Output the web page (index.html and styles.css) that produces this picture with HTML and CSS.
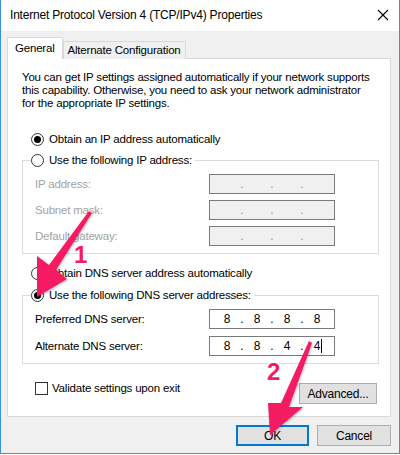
FILE: index.html
```html
<!DOCTYPE html>
<html lang="en">

<head>
    <meta charset="UTF-8">
    <title>Internet Protocol Version 4 (TCP/IPv4) Properties</title>
    <link rel="stylesheet" href="styles.css">
</head>

<body>
    <div class="window">
        <div class="titlebar">
            <span class="title">Internet Protocol Version 4 (TCP/IPv4) Properties</span>
            <svg class="close" width="12" height="12" viewBox="0 0 12 12">
                <path d="M1 1 L11 11 M11 1 L1 11" stroke="#000" stroke-width="1.1" fill="none" />
            </svg>
        </div>

        <div class="content">
            <div class="tabs">
                <div class="tab active">General</div>
                <div class="tab">Alternate Configuration</div>
            </div>

            <div class="panel">
                <p class="intro">You can get IP settings assigned automatically if your network supports<br>this capability. Otherwise, you need to ask your network administrator<br>for the appropriate IP settings.</p>

                <div class="option first"><span class="radio checked"></span>Obtain an IP address automatically</div>

                <fieldset class="group off">
                    <legend><span class="radio"></span>Use the following IP address:</legend>
                    <div class="field">
                        <span class="label">IP address:</span>
                        <div class="ipbox"><span class="oct"></span><span class="dot">.</span><span class="oct"></span><span class="dot">.</span><span class="oct"></span><span class="dot">.</span><span class="oct"></span></div>
                    </div>
                    <div class="field">
                        <span class="label">Subnet mask:</span>
                        <div class="ipbox"><span class="oct"></span><span class="dot">.</span><span class="oct"></span><span class="dot">.</span><span class="oct"></span><span class="dot">.</span><span class="oct"></span></div>
                    </div>
                    <div class="field">
                        <span class="label">Default gateway:</span>
                        <div class="ipbox"><span class="oct"></span><span class="dot">.</span><span class="oct"></span><span class="dot">.</span><span class="oct"></span><span class="dot">.</span><span class="oct"></span></div>
                    </div>
                </fieldset>

                <div class="option dns"><span class="radio"></span>Obtain DNS server address automatically</div>

                <fieldset class="group dnsgroup">
                    <legend><span class="radio checked"></span>Use the following DNS server addresses:</legend>
                    <div class="field">
                        <span class="label">Preferred DNS server:</span>
                        <div class="ipbox"><span class="oct">8</span><span class="dot">.</span><span class="oct">8</span><span class="dot">.</span><span class="oct">8</span><span class="dot">.</span><span class="oct">8</span></div>
                    </div>
                    <div class="field">
                        <span class="label">Alternate DNS server:</span>
                        <div class="ipbox"><span class="oct">8</span><span class="dot">.</span><span class="oct">8</span><span class="dot">.</span><span class="oct">4</span><span class="dot">.</span><span class="oct">4<i class="caret"></i></span></div>
                    </div>
                </fieldset>

                <div class="bottom-row">
                    <div class="check"><span class="box"></span>Validate settings upon exit</div>
                    <button class="btn advanced">Advanced...</button>
                </div>
            </div>

            <div class="footer">
                <button class="btn default">OK</button>
                <button class="btn">Cancel</button>
            </div>
        </div>

        <!-- annotation arrows -->
        <svg class="marks" width="400" height="455" viewBox="0 0 400 455">
            <g class="arrow">
                <polygon points="89,211 92,213 56,270 67,279 37,297 37,256 49,265" />
                <polygon points="309,341 312,343 289,407 303,407 270,435 268,403 281,403" />
            </g>
            <text class="num" x="74" y="263">1</text>
            <text class="num" x="267" y="380">2</text>
        </svg>
    </div>
</body>

</html>
```

FILE: styles.css
```css
* {
    margin: 0;
    padding: 0;
    box-sizing: border-box;
}

body {
    width: 400px;
    height: 455px;
    background: #fff;
    font-family: "Liberation Sans", Arial, sans-serif;
    font-size: 11.5px;
    letter-spacing: -0.2px;
    color: #000;
}

.window {
    position: relative;
    width: 400px;
    height: 454px;
    border: 1px solid #3c94d8;
    border-top: none;
    background: #f0f0f0;
}

.titlebar {
    display: flex;
    align-items: center;
    justify-content: space-between;
    height: 31px;
    padding: 0 10px 1px 9px;
    background: #fff;
    font-size: 12px;
}

.close {
    display: block;
}

.content {
    padding: 6px 8px 0 6px;
}

.tabs {
    display: flex;
    align-items: flex-end;
    margin-bottom: -1px;
}

.tab {
    position: relative;
    height: 18px;
    padding: 0 4px;
    border: 1px solid #d9d9d9;
    border-bottom: none;
    line-height: 17px;
    background: #f0f0f0;
}

.tab.active {
    z-index: 1;
    height: 22px;
    padding: 0 7px;
    line-height: 20px;
    background: #fff;
}

.panel {
    height: 359px;
    padding: 12px 11px 0 14px;
    border: 1px solid #d9d9d9;
    background: #fff;
}

.intro {
    line-height: 13px;
    white-space: nowrap;
}

.option {
    display: flex;
    align-items: center;
    height: 16px;
    margin-left: 9px;
}

.option.first {
    margin-top: 21px;
}

.option.dns {
    margin-top: 11px;
}

.radio {
    position: relative;
    width: 13px;
    height: 13px;
    margin-right: 5px;
    border: 1px solid #333;
    border-radius: 50%;
    background: #fff;
    flex-shrink: 0;
}

.radio.checked::after {
    content: "";
    position: absolute;
    left: 2px;
    top: 2px;
    width: 7px;
    height: 7px;
    border-radius: 50%;
    background: #000;
}

.group {
    margin-top: 5px;
    padding: 6px 0 7px 8px;
    border: 1px solid #dcdcdc;
}

.group legend {
    display: flex;
    align-items: center;
    height: 16px;
    padding-right: 3px;
}

.dnsgroup {
    margin-top: 6px;
}

.field {
    display: flex;
    align-items: center;
    margin-left: 4px;
}

.field + .field {
    margin-top: 6px;
}

.dnsgroup .field + .field {
    margin-top: 7px;
}

.label {
    width: 174px;
}

.off .label {
    color: #a2a2a2;
}

.ipbox {
    display: flex;
    align-items: center;
    width: 126px;
    height: 20px;
    padding-left: 6px;
    border: 1px solid #7a7a7a;
    background: #fff;
    font-size: 12px;
    letter-spacing: 0;
}

.off .ipbox {
    background: #f0f0f0;
}

.oct {
    position: relative;
    width: 22px;
    text-align: center;
}

.dot {
    width: 8px;
    text-align: center;
}

.off .dot {
    color: #9a8f80;
}

.caret {
    position: absolute;
    top: 0;
    left: 15px;
    width: 1px;
    height: 14px;
    background: #000;
}

.bottom-row {
    display: flex;
    justify-content: space-between;
    align-items: flex-start;
    margin-top: 16px;
}

.check {
    display: flex;
    align-items: center;
    height: 16px;
    margin-left: 13px;
}

.box {
    width: 13px;
    height: 13px;
    margin-right: 4px;
    border: 1px solid #333;
    background: #fff;
}

.btn {
    height: 21px;
    border: 1px solid #adadad;
    background: #e1e1e1;
    font-family: inherit;
    font-size: 12px;
    letter-spacing: inherit;
    color: #000;
}

.advanced {
    width: 78px;
    margin: 3px 2px 0 0;
}

.footer {
    display: flex;
    justify-content: flex-end;
    gap: 8px;
    margin-top: 8px;
}

.footer .btn {
    width: 74px;
}

.btn.default {
    width: 73px;
    border: 2px solid #0078d7;
}

.marks {
    position: absolute;
    left: -1px;
    top: 0;
    pointer-events: none;
}

.arrow {
    fill: #f41b62;
    filter: drop-shadow(1px 1px 1px rgba(0, 0, 0, .25));
}

.num {
    font-family: "Liberation Sans", Arial, sans-serif;
    font-size: 24px;
    font-weight: bold;
    fill: #f41b62;
    stroke: #fff;
    stroke-width: 2px;
    paint-order: stroke;
}
```
